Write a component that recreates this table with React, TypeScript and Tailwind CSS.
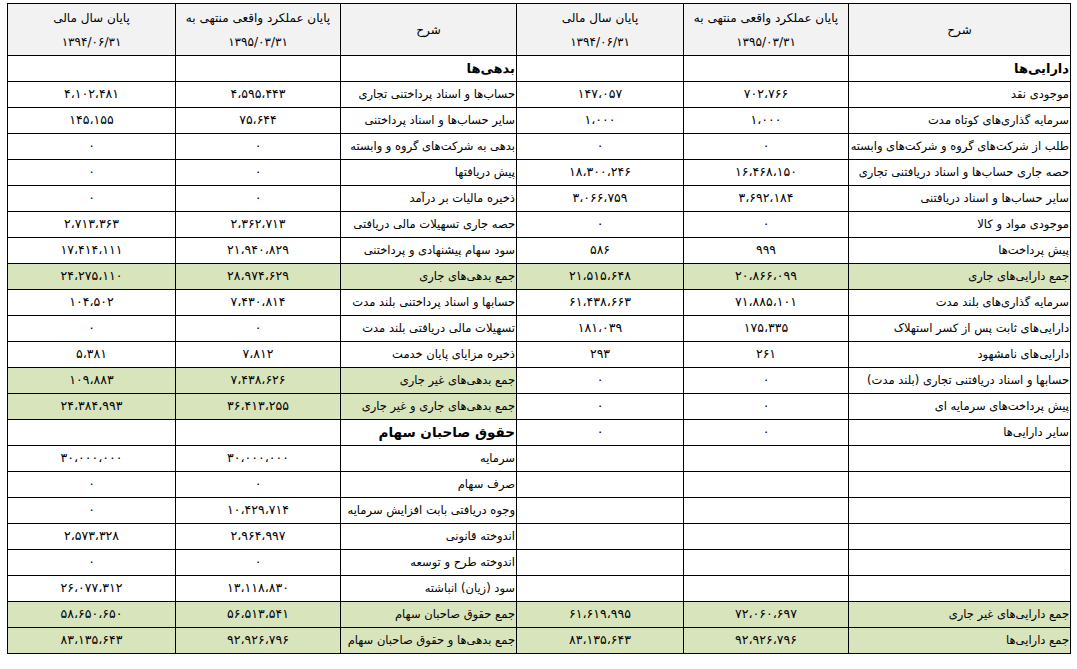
import React from "react";

type Cell = { t: string; a?: string; b?: string; kind?: "h" | "h2" };
type Row = { r: Cell; l: Cell; rg?: boolean; lg?: boolean };

const rows: Row[] = [
  { r: { t: "دارایی‌ها", kind: "h" }, l: { t: "بدهی‌ها", kind: "h" } },
  { r: { t: "موجودی نقد", a: "۷۰۲،۷۶۶", b: "۱۴۷،۰۵۷" }, l: { t: "حساب‌ها و اسناد پرداختنی تجاری", a: "۴،۵۹۵،۴۴۳", b: "۴،۱۰۲،۴۸۱" } },
  { r: { t: "سرمایه گذاری‌های کوتاه مدت", a: "۱،۰۰۰", b: "۱،۰۰۰" }, l: { t: "سایر حساب‌ها و اسناد پرداختنی", a: "۷۵،۶۴۴", b: "۱۴۵،۱۵۵" } },
  { r: { t: "طلب از شرکت‌های گروه و شرکت‌های وابسته", a: "۰", b: "۰" }, l: { t: "بدهی به شرکت‌های گروه و وابسته", a: "۰", b: "۰" } },
  { r: { t: "حصه جاری حساب‌ها و اسناد دریافتنی تجاری", a: "۱۶،۴۶۸،۱۵۰", b: "۱۸،۳۰۰،۲۴۶" }, l: { t: "پیش دریافتها", a: "۰", b: "۰" } },
  { r: { t: "سایر حساب‌ها و اسناد دریافتنی", a: "۳،۶۹۲،۱۸۴", b: "۳،۰۶۶،۷۵۹" }, l: { t: "ذخیره مالیات بر درآمد", a: "۰", b: "۰" } },
  { r: { t: "موجودی مواد و کالا", a: "۰", b: "۰" }, l: { t: "حصه جاری تسهیلات مالی دریافتی", a: "۲،۳۶۲،۷۱۳", b: "۲،۷۱۳،۳۶۳" } },
  { r: { t: "پیش پرداخت‌ها", a: "۹۹۹", b: "۵۸۶" }, l: { t: "سود سهام پیشنهادی و پرداختنی", a: "۲۱،۹۴۰،۸۲۹", b: "۱۷،۴۱۴،۱۱۱" } },
  { r: { t: "جمع دارایی‌های جاری", a: "۲۰،۸۶۶،۰۹۹", b: "۲۱،۵۱۵،۶۴۸" }, l: { t: "جمع بدهی‌های جاری", a: "۲۸،۹۷۴،۶۲۹", b: "۲۴،۲۷۵،۱۱۰" }, rg: true, lg: true },
  { r: { t: "سرمایه گذاری‌های بلند مدت", a: "۷۱،۸۸۵،۱۰۱", b: "۶۱،۴۳۸،۶۶۳" }, l: { t: "حسابها و اسناد پرداختنی بلند مدت", a: "۷،۴۳۰،۸۱۴", b: "۱۰۴،۵۰۲" } },
  { r: { t: "دارایی‌های ثابت پس از کسر استهلاک", a: "۱۷۵،۳۳۵", b: "۱۸۱،۰۳۹" }, l: { t: "تسهیلات مالی دریافتی بلند مدت", a: "۰", b: "۰" } },
  { r: { t: "دارایی‌های نامشهود", a: "۲۶۱", b: "۲۹۳" }, l: { t: "ذخیره مزایای پایان خدمت", a: "۷،۸۱۲", b: "۵،۳۸۱" } },
  { r: { t: "حسابها و اسناد دریافتنی تجاری (بلند مدت)", a: "۰", b: "۰" }, l: { t: "جمع بدهی‌های غیر جاری", a: "۷،۴۳۸،۶۲۶", b: "۱۰۹،۸۸۳" }, lg: true },
  { r: { t: "پیش پرداخت‌های سرمایه ای", a: "۰", b: "۰" }, l: { t: "جمع بدهی‌های جاری و غیر جاری", a: "۳۶،۴۱۳،۲۵۵", b: "۲۴،۳۸۴،۹۹۳" }, lg: true },
  { r: { t: "سایر دارایی‌ها", a: "۰", b: "۰" }, l: { t: "حقوق صاحبان سهام", kind: "h2" } },
  { r: { t: "" }, l: { t: "سرمایه", a: "۳۰،۰۰۰،۰۰۰", b: "۳۰،۰۰۰،۰۰۰" } },
  { r: { t: "" }, l: { t: "صرف سهام", a: "۰", b: "۰" } },
  { r: { t: "" }, l: { t: "وجوه دریافتی بابت افزایش سرمایه", a: "۱۰،۴۲۹،۷۱۴", b: "۰" } },
  { r: { t: "" }, l: { t: "اندوخته قانونی", a: "۲،۹۶۴،۹۹۷", b: "۲،۵۷۳،۳۲۸" } },
  { r: { t: "" }, l: { t: "اندوخته طرح و توسعه", a: "۰", b: "۰" } },
  { r: { t: "" }, l: { t: "سود (زیان) انباشته", a: "۱۳،۱۱۸،۸۳۰", b: "۲۶،۰۷۷،۳۱۲" } },
  { r: { t: "جمع دارایی‌های غیر جاری", a: "۷۲،۰۶۰،۶۹۷", b: "۶۱،۶۱۹،۹۹۵" }, l: { t: "جمع حقوق صاحبان سهام", a: "۵۶،۵۱۳،۵۴۱", b: "۵۸،۶۵۰،۶۵۰" }, rg: true, lg: true },
  { r: { t: "جمع دارایی‌ها", a: "۹۲،۹۲۶،۷۹۶", b: "۸۳،۱۳۵،۶۴۳" }, l: { t: "جمع بدهی‌ها و حقوق صاحبان سهام", a: "۹۲،۹۲۶،۷۹۶", b: "۸۳،۱۳۵،۶۴۳" }, rg: true, lg: true },
];

function DescCell({ c, green }: { c: Cell; green?: boolean }) {
  const base = "border border-black h-[26px] p-0 pr-[1px] text-right align-middle whitespace-nowrap overflow-hidden";
  const bg = green ? " bg-[#d8e4bc]" : "";
  if (c.kind === "h") return <td className={base + bg + " font-bold text-[13px]"}>{c.t}</td>;
  if (c.kind === "h2") return <td className={base + bg + " font-bold text-[13.5px]"}>{c.t}</td>;
  return <td className={base + bg + " text-[11.5px]"}>{c.t}</td>;
}

function NumCell({ v, green }: { v?: string; green?: boolean }) {
  return (
    <td className={"border border-black h-[26px] p-0 text-center align-middle whitespace-nowrap text-[12.5px]" + (green ? " bg-[#d8e4bc]" : "")}>
      {v ?? ""}
    </td>
  );
}

function HeadCells() {
  return (
    <>
      <th className="border border-black bg-[#f2f2f2] font-normal text-center align-middle text-[12px]">شرح</th>
      <th className="border border-black bg-[#f2f2f2] font-normal text-center align-middle leading-[24px] text-[12px]">
        <div>پایان عملکرد واقعی منتهی به</div>
        <div>۱۳۹۵/۰۳/۳۱</div>
      </th>
      <th className="border border-black bg-[#f2f2f2] font-normal text-center align-middle leading-[24px] text-[12px]">
        <div>پایان سال مالی</div>
        <div>۱۳۹۴/۰۶/۳۱</div>
      </th>
    </>
  );
}

export default function App() {
  return (
    <div className="w-[1077px] h-[669px] bg-white pt-[3px] pl-[7px]">
      <table
        dir="rtl"
        className="table-fixed border-collapse text-black w-[1063px]"
        style={{ fontFamily: "Tahoma, 'DejaVu Sans', sans-serif" }}
      >
        <colgroup>
          <col className="w-[222px]" />
          <col className="w-[165px]" />
          <col className="w-[167px]" />
          <col className="w-[176px]" />
          <col className="w-[165px]" />
          <col className="w-[168px]" />
        </colgroup>
        <thead>
          <tr className="h-[52px]">
            <HeadCells />
            <HeadCells />
          </tr>
        </thead>
        <tbody>
          {rows.map((row, i) => (
            <tr key={i} className="h-[26px]">
              <DescCell c={row.r} green={row.rg} />
              <NumCell v={row.r.a} green={row.rg} />
              <NumCell v={row.r.b} green={row.rg} />
              <DescCell c={row.l} green={row.lg} />
              <NumCell v={row.l.a} green={row.lg} />
              <NumCell v={row.l.b} green={row.lg} />
            </tr>
          ))}
        </tbody>
      </table>
    </div>
  );
}
